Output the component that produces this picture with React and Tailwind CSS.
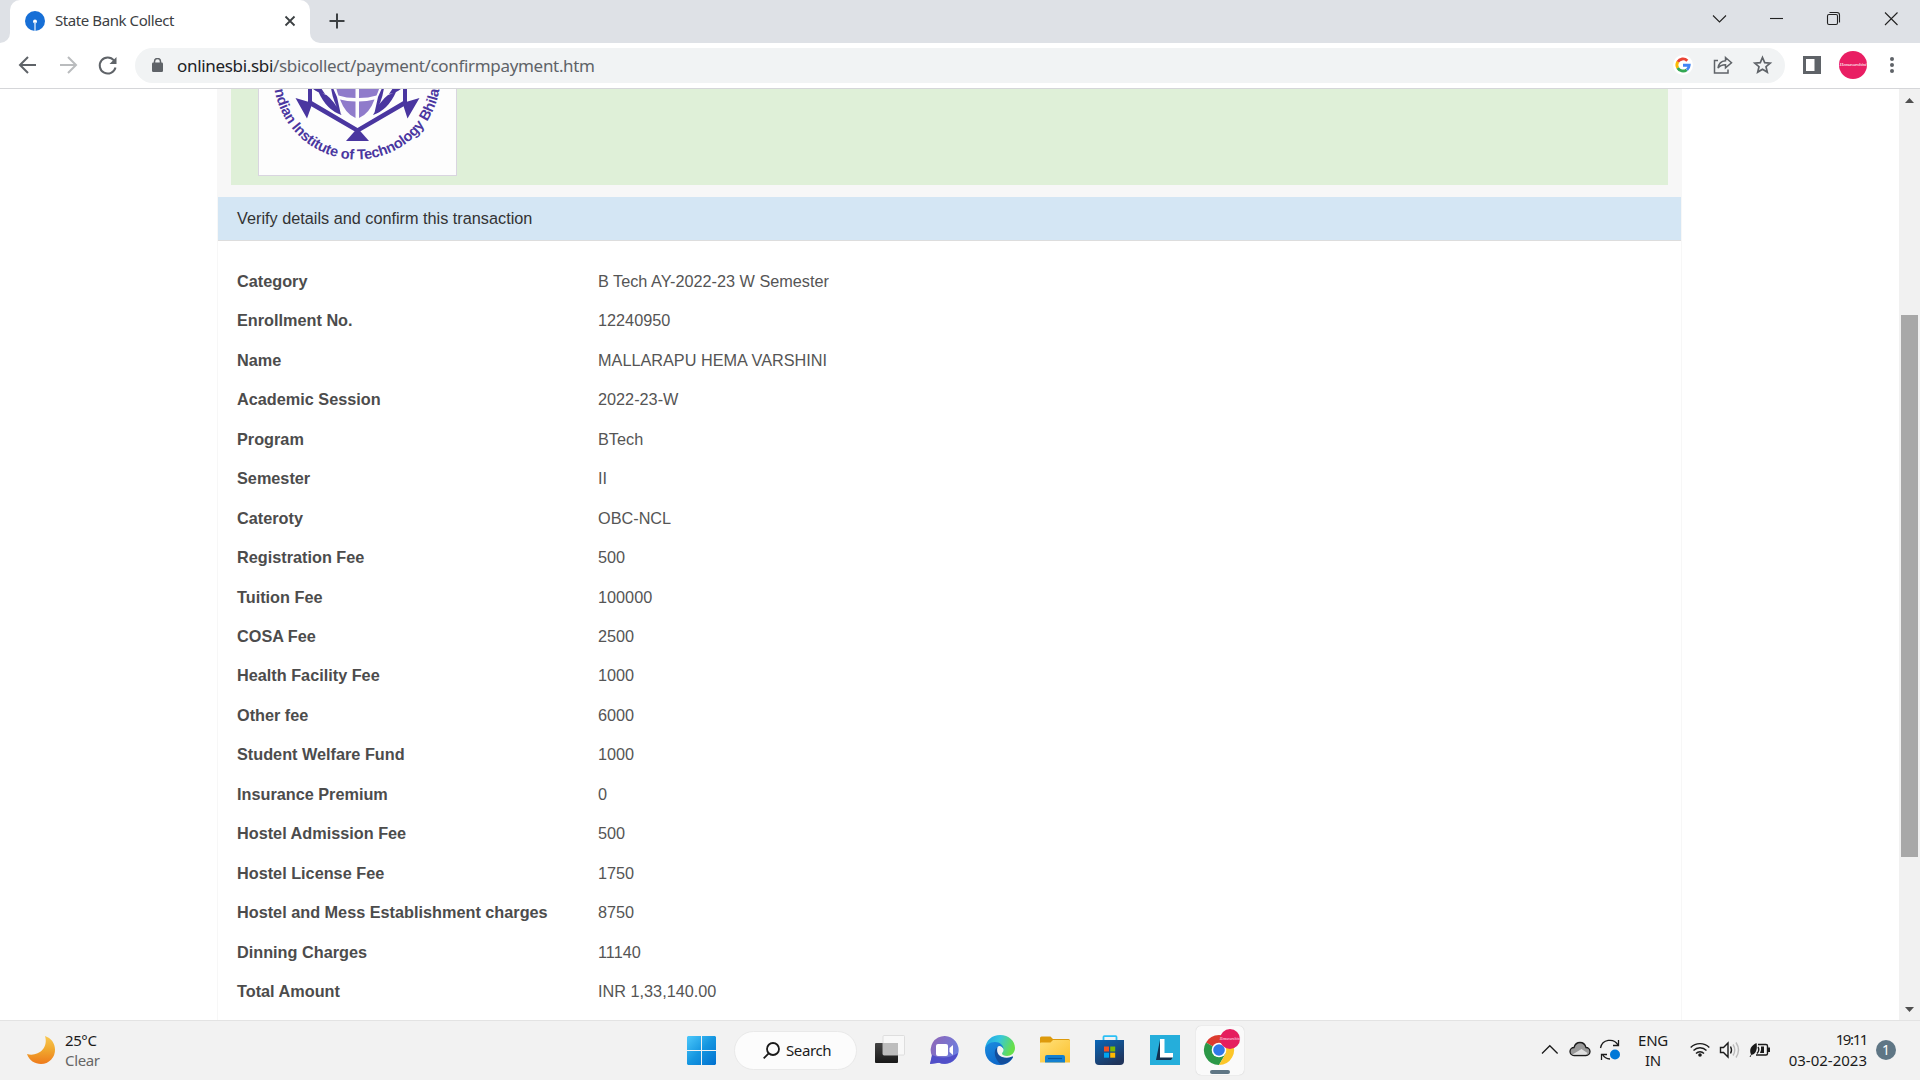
const rows = [
  ["Category", "B Tech AY-2022-23 W Semester"],
  ["Enrollment No.", "12240950"],
  ["Name", "MALLARAPU HEMA VARSHINI"],
  ["Academic Session", "2022-23-W"],
  ["Program", "BTech"],
  ["Semester", "II"],
  ["Cateroty", "OBC-NCL"],
  ["Registration Fee", "500"],
  ["Tuition Fee", "100000"],
  ["COSA Fee", "2500"],
  ["Health Facility Fee", "1000"],
  ["Other fee", "6000"],
  ["Student Welfare Fund", "1000"],
  ["Insurance Premium", "0"],
  ["Hostel Admission Fee", "500"],
  ["Hostel License Fee", "1750"],
  ["Hostel and Mess Establishment charges", "8750"],
  ["Dinning Charges", "11140"],
  ["Total Amount", "INR 1,33,140.00"],
];

const ARC = "M273.500 76 A83.5 83.5 0 0 0 440.500 76";

function TabStrip() {
  return (
    <div className="flex h-[43px] shrink-0 items-end bg-[#dee1e6]">
      <div className="w-[10px] h-[10px] bg-white"><div className="size-full rounded-br-[10px] bg-[#dee1e6]" /></div>
      <div className="flex h-full w-[300px] items-center rounded-t-[10px] bg-white pl-[15px] pb-[2px]">
        <svg className="size-5" viewBox="0 0 20 20">
          <circle cx="10" cy="10" r="10" fill="#176fd6" />
          <circle cx="10" cy="10.6" r="2" fill="#fff" />
          <path d="M10 11v9" stroke="#b9d5f5" strokeWidth="1.6" />
        </svg>
        <span className="ml-[10px] mb-[2px] w-[224px] whitespace-nowrap text-[15px] leading-5 tracking-[-0.42px] text-[#3c4043]">State Bank Collect</span>
        <svg className="ml-[3px] size-4" viewBox="0 0 16 16" stroke="#3c4043" strokeWidth="1.800"><path d="M3.500 3.500l9 9M12.500 3.500l-9 9" /></svg>
      </div>
      <div className="w-[10px] h-[10px] bg-white"><div className="size-full rounded-bl-[10px] bg-[#dee1e6]" /></div>
      <svg className="mb-[13px] ml-[8px] size-[18px]" viewBox="0 0 18 18" stroke="#3c4043" strokeWidth="2"><path d="M9 1.500v15M1.500 9h15" /></svg>
      <div className="ml-auto flex h-full items-start pt-[10px]">
        <svg className="w-[201px] h-[18px]" viewBox="1710 10 201 18" fill="none" stroke="#222" strokeWidth="1.1">
          <path d="M1713 15.500l6.500 6.500 6.500-6.500" />
          <path d="M1770 18.500h13" />
          <rect x="1827.500" y="14.500" width="10" height="10" rx="1.500" />
          <path d="M1829.500 12.500h7.500a2.500 2.500 0 0 1 2.500 2.500v7.500" />
          <path d="M1885 12.500l12.500 12.500M1897.500 12.500l-12.500 12.500" />
        </svg>
        <div className="w-[9px]" />
      </div>
    </div>
  );
}

function Toolbar() {
  return (
    <div className="flex h-[46px] shrink-0 items-center border-b border-[#d5d6d9] bg-white pb-px">
      <svg className="ml-[16px] h-6 w-[104px]" viewBox="16 53 104 24" fill="none" strokeWidth="2">
        <path d="M36 65H20.500M28 57l-8 8 8 8" stroke="#5f6368" />
        <path d="M60 65h15.500M68 57l8 8-8 8" stroke="#babcbe" />
        <path d="M114 60.500a8 8 0 1 0 1.500 7" stroke="#5f6368" />
        <path d="M116.500 57v7h-7z" fill="#5f6368" />
      </svg>
      <div className="ml-[15px] flex h-[35px] w-[1650px] items-center rounded-full bg-[#f1f3f4]">
        <svg className="ml-[17px] h-[14px] w-[11px]" viewBox="0 0 11 14" fill="none">
          <rect y="4.500" width="11" height="9.500" rx="1.200" fill="#5f6368" />
          <path d="M2.500 5V3.500a3 3 0 0 1 6 0V5" stroke="#5f6368" strokeWidth="1.500" />
        </svg>
        <div className="ml-[14px] mt-px whitespace-nowrap text-[17px] leading-6 tracking-[-0.32px] text-[#5f6368]"><span className="text-[#202124]">onlinesbi.sbi</span>/sbicollect/payment/confirmpayment.htm</div>
        <div className="ml-auto mr-[12px]">
          <svg className="h-[24px] w-[102px]" viewBox="1671 54 102 24" fill="none">
            <circle cx="1683" cy="66" r="10" fill="#fff" />
            <g strokeWidth="2.900">
              <path d="M1687.300 61.700A6.100 6.100 0 0 0 1677.700 63" stroke="#ea4335" />
              <path d="M1677.800 62.800a6.100 6.100 0 0 0 0 6.300" stroke="#fbbc05" />
              <path d="M1677.700 69a6.100 6.100 0 0 0 9 1.800" stroke="#34a853" />
              <path d="M1683 66.300h6.200a6.100 6.100 0 0 1-2.300 4.500" stroke="#4285f4" />
            </g>
            <g stroke="#5f6368" strokeWidth="1.500">
              <path d="M1718 61.500h-3.500v12.500h13.500v-3.500" />
              <path d="M1725.500 58.500l6 5.200-6 5.200v-3.200c-3.500 0-5.800 1-7.500 3.400.5-4 3-7 7.500-7.400z" />
            </g>
            <path d="M1762.500 58.500l2.200 5.100 5.500.5-4.200 3.600 1.300 5.400-4.800-2.900-4.800 2.900 1.300-5.400-4.200-3.600 5.500-.5z" stroke="#5f6368" strokeWidth="1.700" />
          </svg>
        </div>
      </div>
      <svg className="ml-[18px] size-[18px]" viewBox="0 0 18 18"><path d="M0 0h18v18H0z" fill="#5f6368" /><path d="M3 3h8.500v12H3z" fill="#fff" /></svg>
      <div className="ml-[18px] flex size-7 items-center justify-center rounded-full bg-[#e91e63] font-['Liberation_Serif'] text-[5px] font-bold italic leading-[10px] tracking-[-0.2px] text-[#fbd0de]">Hemavarshini</div>
      <svg className="ml-[23px] h-[18px] w-1" viewBox="0 0 4 18" fill="#5f6368"><circle cx="2" cy="3" r="2" /><circle cx="2" cy="9" r="2" /><circle cx="2" cy="15" r="2" /></svg>
    </div>
  );
}

function InstituteLogo() {
  return (
    <div className="h-[87px] w-[199px] border-x border-b border-[#d9d5e0] bg-[#fdfdfd]">
      <svg className="h-[86px] w-[197px]" viewBox="259 89 197 86">
        <path id="ring" d={ARC} fill="none" />
        <path d="M335 80h20.500v18q-9 0-17-2.500-3-8-3.500-15.500zM359 80h22q-1 8-4.500 15.500-8 2.500-17.500 2.500zM340 99.500q7 2 15.500 2v16.500q-10-4-15.500-18.500zM359 101.500q8 0 15.500-2-5 14-15.500 18.500z" fill="#8f7bcb" />
        <path d="M318.500 92l8 3q7 5 15 20-15-5-23-23zM312 88h9q2 3 4 6-8-1-13-6zM333 88l4 9 4 18q-8-13-10-27zM396 92l-8 3q-7 5-15 20 15-5 23-23zM402 88h-9q-2 3-4 6 8-1 13-6zM382 88l-4 9-4 18q8-13 10-27z" fill="#4a36a0" />
        <g fill="#4a36a0">
          <path d="M308 84h4v20h-4zM403 84h4v20h-4zM310 100l47.500 28 47.500-28v5.500l-47.500 27.500-47.500-27.500z" />
          <path d="M295.500 98l17 5-5.500 15.500zM419.500 98l-17 5 5 15.500z" />
          <path d="M357.500 128l11.500 13h-23z" />
        </g>
        <text className="font-['Liberation_Sans'] text-[14.5px] font-bold tracking-[-0.2px]" fill="#4a36a0" textAnchor="middle"><textPath href="#ring" startOffset="50%">Indian Institute of Technology Bhilai</textPath></text>
      </svg>
    </div>
  );
}

function Page() {
  return (
    <div className="flex h-[931px] shrink-0 overflow-hidden bg-white font-['Liberation_Sans',sans-serif]">
      <div className="ml-[217px] w-[1465px] border-x border-[#f7f7f7]">
        <div className="bg-[#f7f7f7] px-[13px] pb-3">
          <div className="h-24 bg-[#dff0d8] pl-[27px]"><InstituteLogo /></div>
        </div>
        <div className="h-[44px] border-b border-[#ddd] bg-[#d4e6f4] pl-[19px] text-[16.25px] leading-[43px] text-[#333]">Verify details and confirm this transaction</div>
        <dl className="pt-[20.4px] pl-[19px] text-[16.25px] text-[#4c4c4c]">
          {rows.map(([k, v]) => (
            <div key={k} className="flex h-[39.46px] items-center">
              <dt className="w-[361px] font-bold">{k}</dt>
              <dd className="text-[#555]">{v}</dd>
            </div>
          ))}
        </dl>
      </div>
      <div className="ml-auto flex w-[21px] flex-col items-center bg-[#f1f1f1]">
        <svg className="mt-[9px] h-[5px] w-[9px]" viewBox="0 0 9 5"><path d="M0 5l4.500-5 4.500 5z" fill="#505050" /></svg>
        <div className="mt-[212px] h-[542px] w-[17px] bg-[#a8a8a8]" />
        <svg className="mt-[150px] h-[5px] w-[9px]" viewBox="0 0 9 5"><path d="M0 0l4.500 5 4.500-5z" fill="#505050" /></svg>
      </div>
    </div>
  );
}

function Taskbar() {
  return (
    <div className="flex h-[60px] shrink-0 items-center border-t border-[#e3e3e3] bg-[#f2f2f2] pb-px text-[#1b1b1b]">
      <svg className="ml-[26px] h-[30px] w-[30px]" viewBox="0 0 30 30">
        <defs><linearGradient id="moon" x2="0" y2="1"><stop stopColor="#f9c850" /><stop offset=".5" stopColor="#f0a72e" /><stop offset="1" stopColor="#ee7a1b" /></linearGradient></defs>
        <path d="M19 1c6 2 10 7 10 13.500A14 14 0 0 1 15 29C9 29 3 25.500 1 19c10 3 22-5 18-18z" fill="url(#moon)" />
      </svg>
      <div className="ml-[9px] w-[200px] text-[15px] leading-5 tracking-[-0.4px]"><div>25°C</div><div className="text-[#666] tracking-[-0.35px]">Clear</div></div>
      <svg className="ml-[422px] size-[29px]" viewBox="0 0 29 29">
        <defs><linearGradient id="win" x2="1" y2="1"><stop stopColor="#4cc8fb" /><stop offset=".5" stopColor="#1596e0" /><stop offset="1" stopColor="#0070cf" /></linearGradient></defs>
        <path fill="url(#win)" d="M1 0h13v14H0V1zM15 0h13l1 1v13H15zM0 15h14v14H1l-1-1zM15 15h14v13l-1 1H15z" />
      </svg>
      <div className="ml-[18px] flex h-[39px] w-[123px] items-center rounded-full border border-[#e9e9e9] bg-[#fcfcfc] pl-[28px]">
        <svg className="size-[17px]" viewBox="0 0 17 17" fill="none" stroke="#1b1b1b" strokeWidth="1.800"><circle cx="10" cy="7" r="6" /><path d="M5.700 11.300L.7 16.300" /></svg>
        <span className="ml-[6px] text-[15px] tracking-[-0.4px]">Search</span>
      </div>
      <svg className="ml-[18px] size-[30px]" viewBox="0 0 30 30">
        <defs><linearGradient id="tv" x2="0" y2="1"><stop stopColor="#444" /><stop offset="1" stopColor="#181818" /></linearGradient></defs>
        <rect y="8" width="23" height="20" rx="1" fill="url(#tv)" /><rect x="8" y="0.500" width="21.500" height="19.500" rx="1" fill="#f8f8f8" stroke="#d8d8d8" strokeWidth=".8" /><path d="M8 8h15v12H8z" fill="#bdbdbd" />
      </svg>
      <svg className="ml-[25px] size-[30px]" viewBox="0 0 30 30">
        <defs><linearGradient id="chat" x1="0" x2="1" y2=".6"><stop stopColor="#9264b4" /><stop offset="1" stopColor="#6b7fe0" /></linearGradient></defs>
        <path d="M15 1a14 14 0 1 1-6 26.800L0 29l2-8A14 14 0 0 1 15 1z" fill="url(#chat)" /><path d="M2 20q13 6 26-2a14 14 0 0 1-19 9.800L0 29z" fill="#514fc8" /><rect x="6" y="9" width="12" height="12" rx="2" fill="#fff" /><path d="M19.500 13l3.500-3v10l-3.500-3z" fill="#fff" />
      </svg>
      <svg className="ml-[25px] size-[30px]" viewBox="0 0 30 30">
        <defs>
          <linearGradient id="e1" x2="1" y2=".3"><stop stopColor="#1a9fe8" /><stop offset=".5" stopColor="#36c6dc" /><stop offset="1" stopColor="#67df4a" /></linearGradient>
          <linearGradient id="e2" x2=".7" y2="1"><stop stopColor="#1b8de0" /><stop offset="1" stopColor="#0b62c6" /></linearGradient>
        </defs>
        <path d="M0 14C1 5 7 0 15 0c9 0 15 6 15 13 0 5-4 8-8 8-3 0-5-1-5-2.500 0-1 1.500-1.500 1.500-3.500 0-3-3-5.500-8-5.500C5 9.500 1 12 0 14z" fill="url(#e1)" />
        <path d="M0 15c0-5 5-8 10-8 5 0 8.500 3.500 8.500 7-1-2-2.500-3-4-3-3 0-5 6 0 10 5 3.500 10 2 13 .5l.5.5C26 27 20.500 30 15 30 6 30 0 23 0 15z" fill="url(#e2)" />
        <path d="M12.500 12C8 15 9 24 16 29.500 21.500 29 26 26 28 22l-.5-.5C19 25 10 21 12.500 12z" fill="#124e9c" />
      </svg>
      <svg className="ml-[25px] h-[28px] w-[30px]" viewBox="0 0 30 28">
        <defs><linearGradient id="fold" x2="1" y2="1"><stop stopColor="#ffe07a" /><stop offset="1" stopColor="#fcc12d" /></linearGradient></defs>
        <path d="M0 2q0-1.500 1.500-1.500h9L13 3h15.500Q30 3 30 4.500V10H0z" fill="#dd9a0c" /><path d="M0 7.500q0-1 1-1h9.500L13 4h16q1 0 1 1v21.500H0z" fill="url(#fold)" /><path d="M5 26.500V21q0-2 2-2h16q2 0 2 2v5.500z" fill="#1380d0" /><path d="M8 22.500h14" stroke="#07559d" strokeWidth="1.200" />
      </svg>
      <svg className="ml-[25px] size-[30px]" viewBox="0 0 30 30">
        <defs><linearGradient id="store" x2=".6" y2="1"><stop stopColor="#0a67b8" /><stop offset="1" stopColor="#20355c" /></linearGradient></defs>
        <path d="M8.500 7V2q0-.8.800-.8h11.400q.8 0 .8.800v5" fill="none" stroke="#2cc0f5" strokeWidth="1.800" /><path d="M0 5h29v21q0 4-4 4H4q-4 0-4-4z" fill="url(#store)" />
        <path d="M9 11.500h5v5H9z" fill="#f25022" /><path d="M15.200 11.500h5v5h-5z" fill="#7fba00" /><path d="M9 17.700h5v5H9z" fill="#00a4ef" /><path d="M15.200 17.700h5v5h-5z" fill="#ffb900" />
      </svg>
      <svg className="ml-[25px] size-[30px]" viewBox="0 0 30 30"><path d="M0 0h30v30H0z" fill="#25aedb" /><path d="M10 5L6 25h15l2-3H12z" fill="#12304f" /><path d="M10 4h4.500v14H23v4.500H10z" fill="#fff" /></svg>
      <div className="ml-[16px] flex h-[49px] w-[48px] flex-col items-center rounded-[5px] bg-[#fafafa] shadow-[0_0_1px_#bbb]">
        <svg className="mt-[2px] ml-[4px] h-[37px] w-[38px]" viewBox="0 0 38 37">
          <path d="M16 22L3 14.500A15 15 0 0 1 29 14.500z" fill="#dc3b2f" /><path d="M16 22L3 14.500A15 15 0 0 0 16 37l7-12z" fill="#2b9847" /><path d="M16 22l13-7.500A15 15 0 0 1 16 37l7-12z" fill="#fcc629" />
          <circle cx="16" cy="22" r="7.300" fill="#fff" /><circle cx="16" cy="22" r="5.800" fill="#3079e8" /><circle cx="27" cy="11" r="10" fill="#e51e5e" />
          <text x="27" y="12" textAnchor="middle" className="font-['Liberation_Serif'] text-[3.5px] font-bold italic" fill="#f9bdd1">Hemavarshini</text>
        </svg>
        <div className="mt-[5px] h-1 w-5 rounded-full bg-[#5f7685]" />
      </div>
      <svg className="ml-auto h-[26px] w-[80px]" viewBox="1541 1037 80 26" fill="none" stroke="#1b1b1b" strokeWidth="1.300">
        <path d="M1542 1053.500l7.800-7.800 7.800 7.800" />
        <path d="M1574 1055.500a4 4 0 0 1 0-8c1-3.500 3.500-5 6-5s5 1.500 6 5a4 4 0 0 1 0 8z" fill="#999" /><path d="M1572.500 1054.500l9-5.500 6 4q-.5 1.800-2 1.800h-12z" fill="#e0e0e0" stroke="none" />
        <path d="M1600.500 1048a9.500 9.500 0 0 1 17.500-3M1618.500 1040v5.500h-5.500M1610 1059a9 9 0 0 1-7.500-4.500M1601.500 1060v-5.500h5.500" /><circle cx="1615" cy="1054.500" r="5" fill="#0078d7" stroke="none" />
      </svg>
      <div className="ml-[17px] w-[30px] text-center text-[15px] leading-5 tracking-[-0.3px]"><div>ENG</div><div>IN</div></div>
      <svg className="ml-[22px] h-[20px] w-[82px]" viewBox="1690 1040 82 20" fill="none" stroke="#1b1b1b" strokeWidth="1.400">
        <path d="M1690.700 1047.500a13 13 0 0 1 18.600 0M1693.500 1050.500a9 9 0 0 1 13 0M1696 1053.500a5.500 5.500 0 0 1 8 0" /><circle cx="1700" cy="1055" r="1.800" fill="#1b1b1b" stroke="none" />
        <path d="M1720.500 1047.500h3l4.500-4.500v14l-4.500-4.500h-3zM1730.500 1046.500q2 3.500 0 7" /><path d="M1733 1044.500q3.500 5.500 0 11M1736 1042.500q5 7.500 0 15" stroke="#bbb" />
        <path d="M1758 1044.500h8q1.500 0 1.500 1.500v7.500q0 1.500-1.500 1.500h-10M1758 1047q2 3-1 6.500" /><path d="M1767.500 1047.500h2.500v4.500h-2.500zM1761 1046.500h3v6.500h-4q1.500-3 1-6.500zM1749.500 1057l1.500-2.500c-2-5 0-9 5.500-11.500 1 5 0 10-3.500 11.500l-1.500.2-1 2.300z" fill="#1b1b1b" stroke="none" />
      </svg>
      <div className="ml-[10px] w-[85px] whitespace-nowrap text-right text-[15px] leading-5"><div className="-mt-px mb-px tracking-[-1.400px]">19:11</div><div>03-02-2023</div></div>
      <div className="mr-6 ml-[9px] flex size-5 items-center justify-center rounded-full bg-[#5f7685] text-[14px] leading-5 text-white">1</div>
    </div>
  );
}

export default function App() {
  return (
    <div className="flex h-[1080px] w-[1920px] flex-col overflow-hidden bg-white font-['Noto_Sans',sans-serif]">
      <TabStrip />
      <Toolbar />
      <Page />
      <Taskbar />
    </div>
  );
}
